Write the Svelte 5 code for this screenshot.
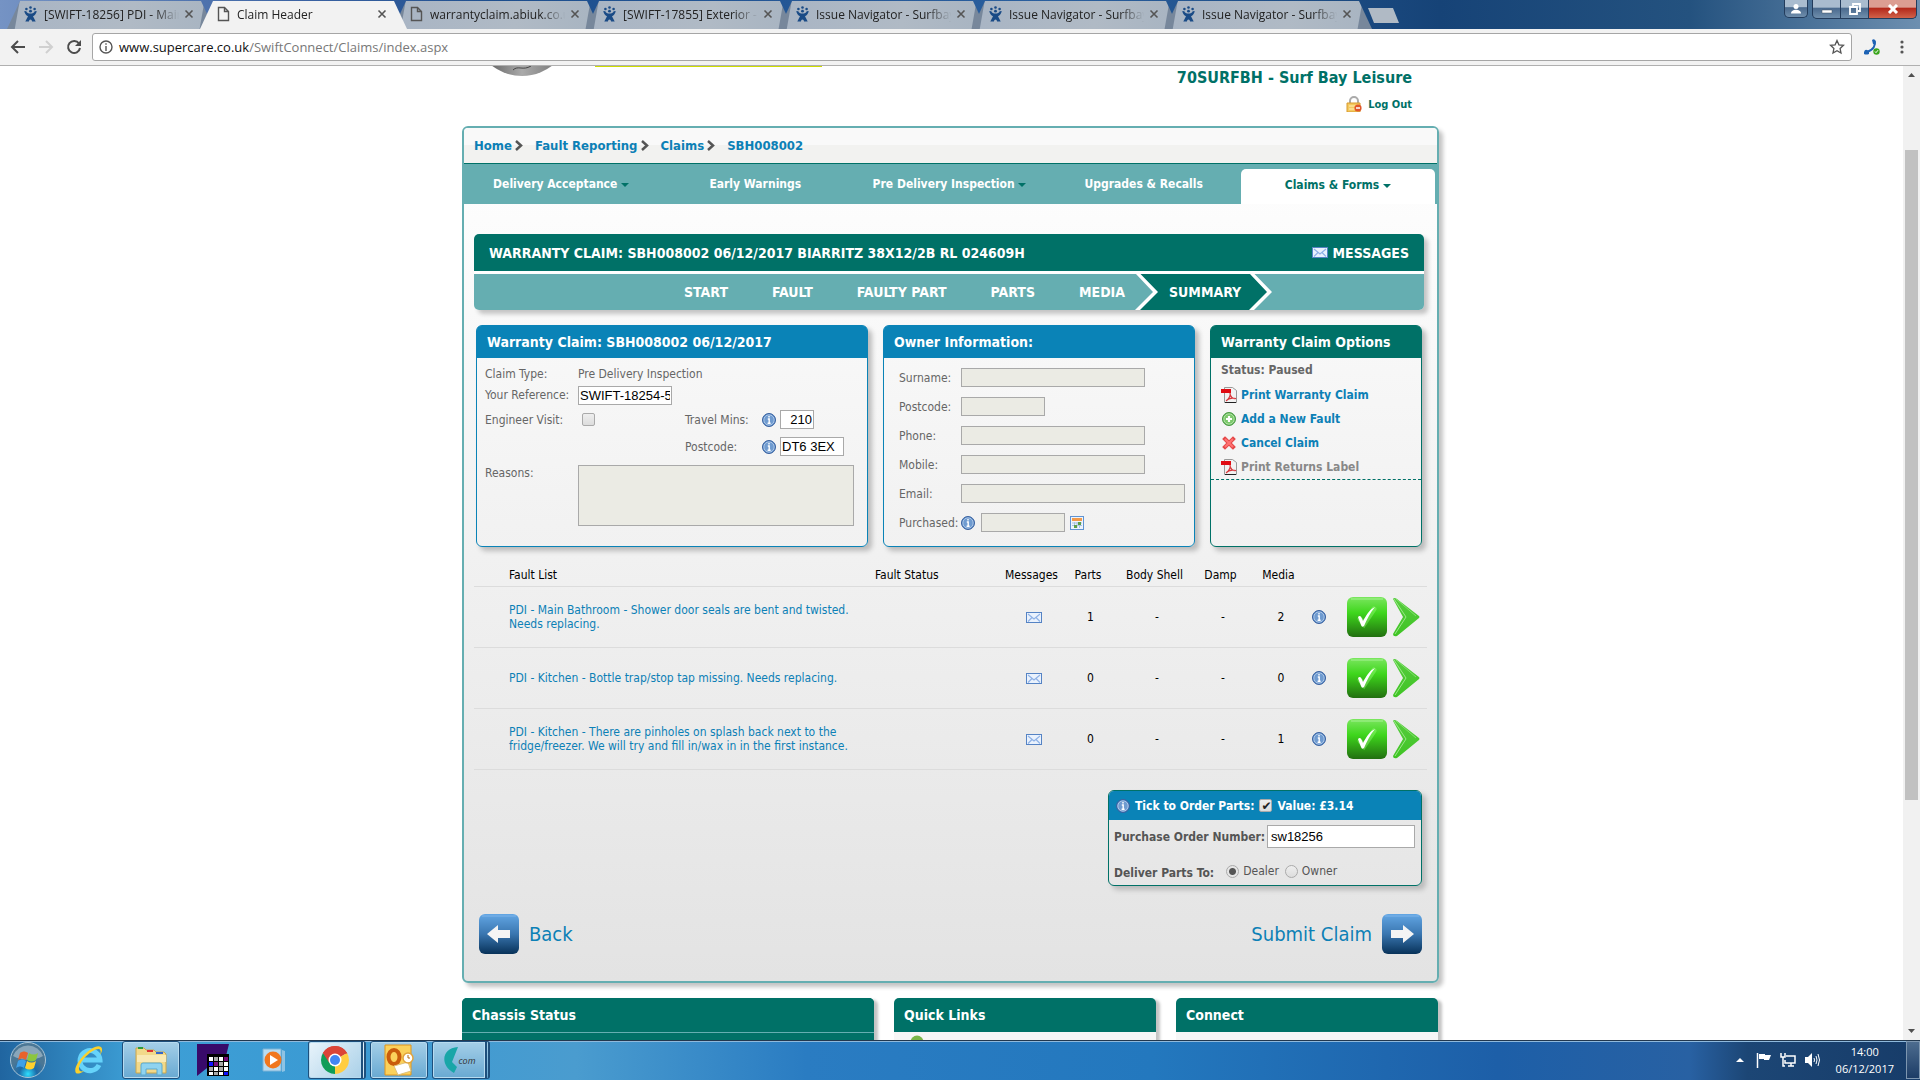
<script lang="ts">
  const tabs = [
    { title: "[SWIFT-18256] PDI - Main", icon: "jira" },
    { title: "Claim Header", icon: "page", active: true },
    { title: "warrantyclaim.abiuk.co.uk", icon: "page" },
    { title: "[SWIFT-17855] Exterior -", icon: "jira" },
    { title: "Issue Navigator - Surfbay", icon: "jira" },
    { title: "Issue Navigator - Surfbay", icon: "jira" },
    { title: "Issue Navigator - Surfbay", icon: "jira" }
  ];

  const crumbs = ["Home", "Fault Reporting", "Claims", "SBH008002"];

  const menu = [
    { label: "Delivery Acceptance", arrow: true },
    { label: "Early Warnings" },
    { label: "Pre Delivery Inspection", arrow: true },
    { label: "Upgrades & Recalls" },
    { label: "Claims & Forms", arrow: true, active: true }
  ];

  const steps = ["START", "FAULT", "FAULTY PART", "PARTS", "MEDIA"];

  const ownerFields = [
    { id: "surname", label: "Surname:", size: "medium" },
    { id: "ownerPostcode", label: "Postcode:", size: "short" },
    { id: "phone", label: "Phone:", size: "medium" },
    { id: "mobile", label: "Mobile:", size: "medium" },
    { id: "email", label: "Email:", size: "long" }
  ];

  const claimOptions = [
    { label: "Print Warranty Claim", icon: "pdf" },
    { label: "Add a New Fault", icon: "add" },
    { label: "Cancel Claim", icon: "cancel" },
    { label: "Print Returns Label", icon: "pdf", disabled: true }
  ];

  const faults = [
    { text: "PDI - Main Bathroom - Shower door seals are bent and twisted. Needs replacing.", parts: 1, media: 2 },
    { text: "PDI - Kitchen - Bottle trap/stop tap missing. Needs replacing.", parts: 0, media: 0 },
    { text: "PDI - Kitchen - There are pinholes on splash back next to the fridge/freezer. We will try and fill in/wax in in the first instance.", parts: 0, media: 1 }
  ];

  let reference = $state("SWIFT-18254-55");
  let engineerVisit = $state(false);
  let travelMins = $state("210");
  let postcode = $state("DT6 3EX");
  let orderParts = $state(true);
  let orderNumber = $state("sw18256");
  let deliverTo = $state("dealer");
</script>

{#snippet info()}
  <svg class="info" width="14" height="14" viewBox="0 0 14 14">
    <circle cx="7" cy="7" r="6.5" fill="#4a7fc0" stroke="#3a62a0" />
    <circle cx="7" cy="7" r="5.2" fill="#6f9bd0" stroke="#c3d6ee" stroke-width="0.8" />
    <path d="M7 3v1.6M5.8 6H7.2v4M5.6 10.2h3" fill="none" stroke="#fff" stroke-width="1.4" />
  </svg>
{/snippet}

{#snippet envelope()}
  <svg width="16" height="11" viewBox="0 0 16 11">
    <rect x="0.5" y="0.5" width="15" height="10" fill="#eaf2fd" stroke="#5583c4" />
    <path d="M2 2l6 5 6-5M2 9.5l4-4M14 9.5l-4-4" fill="none" stroke="#8fb2e6" stroke-width="1.2" />
  </svg>
{/snippet}

{#snippet jira()}
  <svg width="13" height="16" viewBox="0 0 13 16" fill="#1a4b86">
    <circle cx="2.4" cy="3" r="1.3" /><circle cx="6.5" cy="1.5" r="1.3" /><circle cx="10.6" cy="3" r="1.3" />
    <circle cx="6.5" cy="5.2" r="1.4" />
    <path d="M0.300 5l2 .2C3 8.300 10 8.300 10.700 5.200l2-.2c-.3 2.800-1.800 4.300-3.700 5.200l2.700 5.300H8c0-2.800-3-2.800-3 0H1.300L4 10.200C2.100 9.300.6 7.800.3 5z" />
  </svg>
{/snippet}

{#snippet stepArrow(before: string, after: string)}
  <svg width="24" height="36" viewBox="0 0 24 36">
    <path d="M0 0h24v36H0z" fill={after} />
    <path d="M0 0h2l17 18L2 36H0z" fill={before} />
    <path d="M1 0h4.500L23 18 5 36H0l18-18z" fill="#fff" />
  </svg>
{/snippet}

{#snippet bigArrow(left: boolean)}
  <svg width="40" height="40" viewBox="0 0 40 40">
    <rect width="40" height="40" rx="6" fill="url(#blueButton)" />
    <path d="M3 2h34" stroke="#7fb4ea" />
    <path d={left ? "M8 20l11-9v5h12v8H19v5z" : "M32 20l-11-9v5H9v8h12v5z"} fill="#f4f4f4" />
  </svg>
{/snippet}

<div class="desktop">
  <svg class="defs" width="0" height="0">
    <defs>
      <linearGradient id="blueButton" x2="0" y2="1">
        <stop offset="0" stop-color="#62a6e4" /><stop offset="0.5" stop-color="#3a76b0" /><stop offset="1" stop-color="#083259" />
      </linearGradient>
      <linearGradient id="greenButton" x2="0" y2="1">
        <stop offset="0" stop-color="#7be65f" /><stop offset="0.4" stop-color="#3ed61c" /><stop offset="1" stop-color="#226f10" />
      </linearGradient>
      <linearGradient id="greenArrow" x2="0" y2="1">
        <stop offset="0" stop-color="#56cc3e" /><stop offset="1" stop-color="#3fc424" />
      </linearGradient>
      <linearGradient id="silver" x2="1" y2="0">
        <stop offset="0" stop-color="#444" /><stop offset="0.5" stop-color="#aaa" /><stop offset="1" stop-color="#666" />
      </linearGradient>
      <radialGradient id="startOrb" cy="0.9">
        <stop offset="0" stop-color="#2ee0ff" /><stop offset="0.5" stop-color="#1b6aa8" /><stop offset="1" stop-color="#4b7795" />
      </radialGradient>
    </defs>
  </svg>

  <header class="tab-strip">
    <div class="tabs">
      {#each tabs as tab}
        <button class="tab" class:active={tab.active}>
          {#if tab.icon === "jira"}
            {@render jira()}
          {:else}
            <svg width="13" height="16" viewBox="0 0 13 16">
              <path d="M1.5 1.5h6l4 4v9h-10zM7.5 1.5v4h4" fill="none" stroke="#555" stroke-width="1.4" />
            </svg>
          {/if}
          <span class="tab-title">{tab.title}</span>
          <svg width="10" height="10" viewBox="0 0 10 10">
            <path d="M1.5 1.5l7 7M8.5 1.5l-7 7" stroke="#555" stroke-width="1.6" />
          </svg>
        </button>
      {/each}
      <button class="new-tab" aria-label="New tab"></button>
    </div>
    <div class="window-buttons">
      <button class="user" aria-label="User">
        <svg width="12" height="10" viewBox="0 0 12 10" fill="#fff"><circle cx="6" cy="2.5" r="2.5" /><path d="M1 9.5c0-5 10-5 10 0z" /></svg>
      </button>
      <div class="window-group">
        <button aria-label="Minimise">
          <svg width="12" height="10" viewBox="0 0 12 10"><path d="M1 6h10v3H1z" fill="#fff" stroke="#456" stroke-width="0.5" /></svg>
        </button>
        <button aria-label="Restore">
          <svg width="12" height="12" viewBox="0 0 12 12" fill="none" stroke="#fff" stroke-width="1.8"><path d="M4 3V1h7v7H9M1 4h7v7H1z" /></svg>
        </button>
        <button class="close" aria-label="Close">
          <svg width="12" height="10" viewBox="0 0 12 10"><path d="M2 1l8 8M10 1L2 9" stroke="#fff" stroke-width="3" /></svg>
        </button>
      </div>
    </div>
  </header>

  <div class="toolbar">
    <button aria-label="Back">
      <svg width="16" height="16" viewBox="0 0 16 16" fill="none" stroke="#4c4c4c" stroke-width="2"><path d="M15 8H2M8 2L2 8l6 6" /></svg>
    </button>
    <button aria-label="Forward">
      <svg width="16" height="16" viewBox="0 0 16 16" fill="none" stroke="#d0d0d0" stroke-width="2"><path d="M1 8h13M8 2l6 6-6 6" /></svg>
    </button>
    <button aria-label="Reload">
      <svg width="16" height="16" viewBox="0 0 16 16"><path d="M13 4.5A6 6 0 1 0 14 9" fill="none" stroke="#4c4c4c" stroke-width="2" /><path d="M15 1v6H9z" fill="#4c4c4c" /></svg>
    </button>
    <div class="omnibox">
      <svg width="14" height="14" viewBox="0 0 14 14" fill="none" stroke="#555" stroke-width="1.4"><circle cx="7" cy="7" r="6" /><path d="M7 3.300v1.5M7 6v5" /></svg>
      <span class="url">www.supercare.co.uk<span>/SwiftConnect/Claims/index.aspx</span></span>
      <svg width="16" height="16" viewBox="0 0 16 16"><path d="M8 1.5l1.900 4.300 4.600.5-3.400 3.200.9 4.600L8 11.800l-4 2.300.9-4.600L1.500 6.300l4.600-.5z" fill="none" stroke="#555" stroke-width="1.3" /></svg>
    </div>
    <button aria-label="Phone">
      <svg width="16" height="16" viewBox="0 0 16 16">
        <path d="M10.500 2c1.500 4-1 9-7.500 11" fill="none" stroke="#1d62b4" stroke-width="2" />
        <path d="M8 1q3-2 4 2l-1 3-2-1zM0 13q1-3 3-2l2 1v3q-3 1-5 0z" fill="#1d62b4" />
        <circle cx="12.500" cy="12.500" r="3.200" fill="#3aa51c" /><path d="M11 12.500l1 1.200 2-2.500" stroke="#fff" fill="none" />
      </svg>
    </button>
    <button class="more" aria-label="Menu">
      <svg width="4" height="16" viewBox="0 0 4 16" fill="#555"><circle cx="2" cy="3" r="1.6" /><circle cx="2" cy="8" r="1.6" /><circle cx="2" cy="13" r="1.6" /></svg>
    </button>
  </div>

  <div class="viewport">
    <div class="site">
      <div class="site-header">
        <svg width="62" height="10" viewBox="0 0 62 10"><circle cx="31" cy="-39" r="49" fill="url(#silver)" /><path d="M22 4c5-5 10 1 18-4" stroke="#444" fill="none" /></svg>
        <div class="logo-line"></div>
        <div class="account">
          <strong>70SURFBH - Surf Bay Leisure</strong>
          <a href="#logout">
            <svg width="16" height="16" viewBox="0 0 16 16">
              <path d="M4 8V5a4 4 0 0 1 8 0v3" fill="none" stroke="#aaa" stroke-width="2" />
              <path d="M1 7h13v9H1z" fill="#f4c95f" stroke="#d89a2c" /><path d="M3 10h9M3 13h9" stroke="#fff0b8" />
              <circle cx="12" cy="12" r="3.6" fill="#e0562a" /><path d="M10 12h4" stroke="#fff" stroke-width="1.5" />
            </svg>
            Log Out
          </a>
        </div>
      </div>

      <main class="main-box">
        <nav class="breadcrumb">
          {#each crumbs as crumb, i}
            <a href="#{crumb}">{crumb}</a>
            {#if i < crumbs.length - 1}
              <svg width="8" height="11" viewBox="0 0 8 11"><path d="M1 1l5 4.500L1 10" fill="none" stroke="#555" stroke-width="2.5" /></svg>
            {/if}
          {/each}
        </nav>

        <nav class="menu">
          {#each menu as item}
            <a href="#{item.label}" class:active={item.active}>
              {item.label}
              {#if item.arrow}<span class="arrow"></span>{/if}
            </a>
          {/each}
        </nav>

        <div class="content">
          <div class="claim-bar">
            <div class="claim-title">
              <h1>WARRANTY CLAIM: SBH008002 06/12/2017 BIARRITZ 38X12/2B RL 024609H</h1>
              <a href="#messages">{@render envelope()} MESSAGES</a>
            </div>
            <div class="steps">
              {#each steps as step}
                <a href="#{step}">{step}</a>
              {/each}
              <div class="current">
                {@render stepArrow("#65aeb1", "#007167")}
                <a href="#summary">SUMMARY</a>
                {@render stepArrow("#007167", "#65aeb1")}
              </div>
            </div>
          </div>

          <div class="cards">
            <section class="card">
              <h2>Warranty Claim: SBH008002 06/12/2017</h2>
              <div class="claim-form">
                <span>Claim Type:</span>
                <span class="wide">Pre Delivery Inspection</span>
                <label for="reference">Your Reference:</label>
                <div class="wide"><input id="reference" class="reference" bind:value={reference} /></div>
                <label for="engineer">Engineer Visit:</label>
                <div><input id="engineer" type="checkbox" class="tick" bind:checked={engineerVisit} /></div>
                <label for="travel">Travel Mins:</label>
                {@render info()}
                <input id="travel" class="travel" bind:value={travelMins} />
                <label for="postcode" class="third">Postcode:</label>
                {@render info()}
                <input id="postcode" class="postcode" bind:value={postcode} />
                <label for="reasons" class="reasons">Reasons:</label>
                <textarea id="reasons" class="wide" disabled></textarea>
              </div>
            </section>

            <section class="card">
              <h2>Owner Information:</h2>
              <div class="owner-form">
                {#each ownerFields as field}
                  <div class="owner-row">
                    <label for={field.id}>{field.label}</label>
                    <input id={field.id} class={field.size} disabled />
                  </div>
                {/each}
                <div class="owner-row">
                  <label for="purchased">Purchased:</label>
                  {@render info()}
                  <input id="purchased" class="short" disabled />
                  <svg width="14" height="14" viewBox="0 0 14 14">
                    <rect x="0.5" y="0.5" width="13" height="13" fill="#eef4fc" stroke="#5f93d2" />
                    <path d="M2 2h10v3H2z" fill="#f29a4a" />
                    <path d="M2 7h10M2 9.500h10M4.500 6v6M7 6v6M9.500 6v6" stroke="#a8c2e2" />
                    <path d="M8 6h3v3H8zM4 9h3v3H4z" fill="#5aa04b" />
                  </svg>
                </div>
              </div>
            </section>

            <section class="card options">
              <h2>Warranty Claim Options</h2>
              <div class="status">Status: Paused</div>
              <ul>
                {#each claimOptions as option}
                  <li class:disabled={option.disabled}>
                    <svg width="16" height="16" viewBox="0 0 16 16">
                      {#if option.icon === "pdf"}
                        <path d="M3.500 0.500h8l4 3v12h-12z" fill="#f2f2f2" stroke="#999" /><path d="M4 15.500h11" stroke="#222" />
                        <path d="M0 2h10v4H0z" fill="#e00b12" />
                        <path d="M5 14c3-2 5-6 4-8 0 4 3 6 6 5.500-4-1-8 0-10 2.500" fill="none" stroke="#d8383c" stroke-width="1.2" />
                      {:else if option.icon === "add"}
                        <circle cx="8" cy="8" r="6.5" fill="#58b04c" stroke="#4a9a44" /><circle cx="8" cy="8" r="5.2" fill="#7cc96b" stroke="#c6ecbc" stroke-width="0.8" />
                        <path d="M8 5v6M5 8h6" stroke="#fff" stroke-width="2.2" />
                      {:else}
                        <path d="M4 4l8 8M12 4l-8 8" stroke="#e54848" stroke-width="4" stroke-linecap="square" />
                        <path d="M4 4l8 8M12 4l-8 8" stroke="#ff7272" stroke-width="2" />
                      {/if}
                    </svg>
                    <a href="#{option.label}">{option.label}</a>
                  </li>
                {/each}
              </ul>
            </section>
          </div>

          <table>
            <thead>
              <tr>
                <th class="fault">Fault List</th>
                <th class="state">Fault Status</th>
                <th class="messages">Messages</th>
                <th class="parts">Parts</th>
                <th class="body-shell">Body Shell</th>
                <th class="damp">Damp</th>
                <th class="media">Media</th>
                <th class="hint"></th>
                <th class="buttons"></th>
              </tr>
            </thead>
            <tbody>
              {#each faults as fault}
                <tr>
                  <td class="fault"><a href="#fault">{fault.text}</a></td>
                  <td></td>
                  <td>{@render envelope()}</td>
                  <td>{fault.parts}</td>
                  <td>-</td>
                  <td>-</td>
                  <td>{fault.media}</td>
                  <td class="hint">{@render info()}</td>
                  <td>
                    <div class="fault-buttons">
                      <button aria-label="Complete">
                        <svg width="40" height="40" viewBox="0 0 40 40">
                          <rect width="40" height="40" rx="6" fill="url(#greenButton)" /><path d="M4 2h32" stroke="#a6f293" />
                          <path d="M13 22l4 5 10-15" fill="none" stroke="#9dff80" stroke-width="5" opacity="0.4" stroke-linecap="round" />
                          <path d="M11 20c2-2 3-1 5 4C20 17 23 12 28 10 23 16 20 22 17 29c-2 1-2 1-3-1z" fill="#fff" />
                        </svg>
                      </button>
                      <button aria-label="Open">
                        <svg width="28" height="40" viewBox="0 0 28 40">
                          <path d="M1 2q1-2 4 0l22 17q1 1 0 2L5 39q-4 1-4-2l10-17z" fill="url(#greenArrow)" />
                          <path d="M2 2l12 18L3 37" fill="none" stroke="#9be889" />
                          <path d="M4 2l20 17" stroke="#83e06c" />
                        </svg>
                      </button>
                    </div>
                  </td>
                </tr>
              {/each}
            </tbody>
          </table>

          <section class="order">
            <div class="order-title">
              {@render info()}
              <label for="orderParts">Tick to Order Parts:</label>
              <input id="orderParts" type="checkbox" class="tick" bind:checked={orderParts} />
              <span>Value: £3.14</span>
            </div>
            <div class="order-row">
              <label for="orderNumber">Purchase Order Number:</label>
              <input id="orderNumber" bind:value={orderNumber} />
            </div>
            <div class="order-row deliver">
              <strong>Deliver Parts To:</strong>
              <label><input type="radio" value="dealer" bind:group={deliverTo} /> Dealer</label>
              <label><input type="radio" value="owner" bind:group={deliverTo} /> Owner</label>
            </div>
          </section>

          <div class="page-buttons">
            <button>{@render bigArrow(true)} Back</button>
            <button>Submit Claim {@render bigArrow(false)}</button>
          </div>
        </div>
      </main>

      <footer>
        <section class="lined"><h2>Chassis Status</h2></section>
        <section>
          <h2>Quick Links</h2>
          <svg width="14" height="8" viewBox="0 0 14 8"><circle cx="7" cy="10" r="6.5" fill="#7ab648" /></svg>
        </section>
        <section><h2>Connect</h2></section>
      </footer>
    </div>

    <div class="scrollbar">
      <svg width="7" height="4" viewBox="0 0 7 4"><path d="M0 4h7L3.500 0z" fill="#505050" /></svg>
      <div class="track"><div class="thumb"></div></div>
      <svg width="7" height="4" viewBox="0 0 7 4"><path d="M0 0h7L3.500 4z" fill="#505050" /></svg>
    </div>
  </div>

  <div class="taskbar">
    <button class="start" aria-label="Start">
      <svg width="38" height="38" viewBox="0 0 38 38">
        <circle cx="19" cy="19" r="17.5" fill="url(#startOrb)" stroke="#a9c4d6" />
        <path d="M4 15a16 16 0 0 1 30 0c-9 5-21 5-30 0z" fill="#fff" opacity="0.35" />
        <path d="M11 12c3-2 5-2 8 0l-2 7c-3-2-5-2-8 0z" fill="#e8622b" /><path d="M20 12c3 2 6 2 9 0l-2 7c-3 2-6 2-9 0z" fill="#8cc63f" />
        <path d="M9 20c3-2 5-2 8 0l-2 7c-3-2-5-2-8 0z" fill="#3fa0e8" /><path d="M18 20c3 2 6 2 9 0l-2 7c-3 2-6 2-9 0z" fill="#ffd02e" />
      </svg>
    </button>
    <button aria-label="Internet Explorer">
      <svg width="32" height="32" viewBox="0 0 32 32">
        <path d="M26 21a10 10 0 1 1 1-5H9" fill="none" stroke="#66d3fa" stroke-width="5" />
        <path d="M3 29C-2 22 20-2 28 3c2 2 1 5-1 8 1-3 1-5-1-6C20 4 5 18 6 25c0 2 2 3 5 2-4 3-7 3-8 2z" fill="#fad02c" />
      </svg>
    </button>
    <button class="open" aria-label="Explorer">
      <svg width="34" height="32" viewBox="0 0 34 32">
        <path d="M2 4h8l2 2h8l2 2h8l2 2v19H2z" fill="#f2d98a" stroke="#c9a64d" />
        <path d="M4 4h5" stroke="#2c9a3c" stroke-width="2" /><path d="M13 7h6" stroke="#d33" stroke-width="2" /><path d="M22 9h7" stroke="#36c" stroke-width="2" />
        <path d="M3 11h29v7H3z" fill="#f9e9b4" />
        <path d="M7 31V21q0-2 2-2h17q2 0 2 2v10h-5v-6H12v6z" fill="#8fd3f0" stroke="#5aa9cf" />
      </svg>
    </button>
    <button aria-label="Grid">
      <svg width="32" height="32" viewBox="0 0 32 32">
        <path d="M0 0h32l-3 12H10v12L0 32z" fill="#380a6a" /><path d="M10 10h22v22H10z" fill="#000" />
        <g fill="#fff">
          <path d="M12 13h4v4h-4zM22 13h4v4h-4zM17 23h4v4h-4zM27 18h4v4h-4zM12 28h4v3h-4zM22 28h4v3h-4zM27 23h4v4h-4z" />
          <path d="M17 13h4v4h-4zM22 18h4v4h-4zM12 23h4v4h-4zM17 28h4v3h-4zM22 23h4v4h-4z" fill="#aaa" />
          <path d="M12 18h4v4h-4zM27 28h4v3h-4z" fill="#11f" /><path d="M27 13h4v4h-4zM17 18h4v4h-4z" fill="#7b0d7b" />
        </g>
      </svg>
    </button>
    <button aria-label="Media Player">
      <svg width="26" height="26" viewBox="0 0 26 26">
        <path d="M1 2h18v22H1z" fill="#b9dcf1" stroke="#7db3d6" /><path d="M20 3l3 1v20l-3 1z" fill="#8ec3e4" />
        <circle cx="11" cy="13" r="8.5" fill="#f1771e" /><path d="M8 8l8 5-8 5z" fill="#fff" />
      </svg>
    </button>
    <button class="open active stack" aria-label="Chrome">
      <svg width="30" height="30" viewBox="0 0 30 30">
        <path d="M15 15L2.900 8A14 14 0 0 1 27.100 8z" fill="#db4437" /><path d="M15 15L27.100 8A14 14 0 0 1 15 29z" fill="#ffcd40" />
        <path d="M15 15L15 29A14 14 0 0 1 2.900 8z" fill="#0f9d58" /><path d="M15 8.500H27.400A14 14 0 0 0 2.900 8l6.500 10z" fill="#db4437" />
        <circle cx="15" cy="15" r="6.5" fill="#fff" /><circle cx="15" cy="15" r="5" fill="#4285f4" />
      </svg>
    </button>
    <button class="open" aria-label="Outlook">
      <svg width="30" height="32" viewBox="0 0 30 32">
        <path d="M1 1h26v30H1z" fill="#fbd15b" stroke="#e0941d" /><ellipse cx="10" cy="13" rx="5.5" ry="7" fill="none" stroke="#c95c0c" stroke-width="4" />
        <path d="M10 22l14-4 3 9-13 4z" fill="#fff" stroke="#ddc07a" />
        <circle cx="24" cy="14" r="5" fill="#fff" stroke="#e0a33b" stroke-width="1.5" /><path d="M24 11v3h2" fill="none" stroke="#b06a12" />
      </svg>
    </button>
    <button class="open stack" aria-label="Com">
      <svg width="16" height="28" viewBox="0 0 16 28"><path d="M15 1C-2 2-3 20 11 27l3-6-5-5z" fill="#19a6a8" /></svg>
      <em>com</em>
    </button>
    <div class="tray">
      <svg width="8" height="4" viewBox="0 0 8 4"><path d="M0 4h8L4 0z" fill="#fff" /></svg>
      <svg width="16" height="16" viewBox="0 0 16 16"><path d="M1.500 1v15" stroke="#fff" stroke-width="1.5" /><path d="M3 2h6v1h6l-2 5H8V7H3z" fill="#fff" /></svg>
      <svg width="16" height="16" viewBox="0 0 16 16" fill="none" stroke="#fff" stroke-width="1.5"><path d="M6 4h9v7H5V8M8 14h6M11 11v3M1 1v4h4V1M3 5v9h2" /></svg>
      <svg width="16" height="16" viewBox="0 0 16 16"><path d="M1 5h3l4-4v14l-4-4H1z" fill="#fff" /><path d="M10 6q1 2 0 4M12 4q2 4 0 8M14 2q3 6 0 12" fill="none" stroke="#fff" /></svg>
      <div class="clock"><span>14:00</span><span>06/12/2017</span></div>
      <button class="show-desktop" aria-label="Show desktop"></button>
    </div>
  </div>
</div>

<style>
  :global(body) {
    margin: 0;
    overflow: hidden;
  }

  .desktop {
    display: flex;
    flex-direction: column;
    height: 100vh;
    font-family: Tahoma, "DejaVu Sans Condensed", "DejaVu Sans", sans-serif;
    font-size: 12px;
    color: #666;
    background: #fff;
  }

  .defs {
    display: block;
  }

  svg {
    flex: none;
  }

  button {
    padding: 0;
    border: none;
    background: none;
    font: inherit;
    color: inherit;
  }

  a {
    color: #0c80b6;
    text-decoration: none;
  }

  h1,
  h2 {
    margin: 0;
    font-size: 14px;
    color: #fff;
  }

  input,
  textarea {
    box-sizing: border-box;
    margin: 0;
    padding: 1px;
    border: 1px solid #a9a9a9;
    background: #fff;
    font: 13px "Liberation Sans", Arial, sans-serif;
    color: #000;
  }

  input:disabled,
  textarea:disabled {
    background: #ebebe4;
  }

  input[type="checkbox"] {
    width: 13px;
    height: 13px;
  }

  .tick {
    appearance: none;
    border: 1px solid #aaa;
    border-radius: 2px;
    background: linear-gradient(#eee, #ddd);
  }

  .tick:checked::before {
    content: "✔";
    display: block;
    font: 12px/10px "DejaVu Sans", sans-serif;
    color: #222;
  }

  /* browser window */
  .tab-strip {
    display: flex;
    justify-content: space-between;
    height: 29px;
    background: linear-gradient(90deg, #7593c4, #3a62a2 16%, #1d4e8d 26%, #2a5f9e 55%, #164377 75%, #24527f 88%, #6d8fb0);
    font-family: "Segoe UI", "Open Sans", sans-serif;
  }

  .tabs {
    display: flex;
    align-items: flex-end;
    padding-left: 7px;
  }

  .tab {
    display: flex;
    align-items: center;
    box-sizing: border-box;
    width: 207px;
    height: 28px;
    margin-right: -14px;
    padding: 0 20px 2px 17px;
    background: linear-gradient(100deg, #77879b 12px, #a9b5c4 13px, #b0bac5 60%, #a9b5c2 194px, #77879b 195px);
    clip-path: polygon(0 100%, 13px 0, 194px 0, 100% 100%);
    color: #222;
  }

  .tab.active {
    z-index: 1;
    background: #f2f2f2;
  }

  .tab-title {
    flex: 1;
    margin: 0 2px 0 7px;
    overflow: hidden;
    white-space: nowrap;
    text-align: left;
    mask-image: linear-gradient(90deg, #000 80%, transparent 98%);
  }

  .new-tab {
    width: 31px;
    height: 15px;
    margin: 0 0 6px 10px;
    background: #b0bac5;
    clip-path: polygon(0 0, 25px 0, 100% 100%, 6px 100%);
  }

  .window-buttons {
    display: flex;
    gap: 4px;
    padding-right: 3px;
  }

  .window-buttons button {
    display: flex;
    align-items: center;
    justify-content: center;
    width: 27px;
    height: 18px;
    background: linear-gradient(#a9bccf 40%, #4a6a8e 45%, #6f8eac);
  }

  .window-buttons .user,
  .window-group {
    height: 18px;
    border: 1px solid #233c5c;
    border-top: none;
    border-radius: 0 0 5px 5px;
    overflow: hidden;
  }

  .window-buttons .user {
    width: 24px;
  }

  .window-group {
    display: flex;
    gap: 1px;
    background: #233c5c;
  }

  .window-buttons .close {
    width: 47px;
    background: linear-gradient(#dc9d92 40%, #b3271a 45%, #d1624a);
  }

  .toolbar {
    display: flex;
    align-items: center;
    gap: 12px;
    height: 36px;
    padding: 0 16px 0 10px;
    border-bottom: 1px solid #b0b0b0;
    background: #f2f2f2;
  }

  .toolbar button {
    display: flex;
  }

  .toolbar .more {
    margin-left: 8px;
  }

  .omnibox {
    flex: 1;
    display: flex;
    align-items: center;
    gap: 6px;
    height: 26px;
    margin-left: -2px;
    padding: 0 6px;
    border: 1px solid #a6a6a6;
    border-radius: 3px;
    background: #fff;
    font: 13px "Segoe UI", "Open Sans", sans-serif;
    color: #111;
  }

  .url {
    flex: 1;
  }

  .url span {
    color: #777;
  }

  .viewport {
    flex: 1;
    display: grid;
    grid-template-columns: 1fr 17px;
    min-height: 0;
    overflow: hidden;
  }

  .scrollbar {
    display: flex;
    flex-direction: column;
    align-items: center;
    padding: 7px 0;
    background: #f1f1f1;
  }

  .track {
    flex: 1;
    padding-top: 73px;
  }

  .thumb {
    width: 13px;
    height: 74%;
    background: #c1c1c1;
  }

  /* site */
  .site {
    box-sizing: border-box;
    width: 979px;
    max-width: 100%;
    min-height: 0;
    margin: 0 auto;
    padding-right: 2px;
  }

  .site-header {
    display: flex;
    align-items: flex-start;
    height: 60px;
    padding: 0 27px 0 29px;
  }

  .logo-line {
    width: 227px;
    height: 1px;
    margin-left: 42px;
    background: #cedc00;
  }

  .account {
    flex: 1;
    display: flex;
    flex-direction: column;
    align-items: flex-end;
    gap: 7px;
    font-weight: bold;
  }

  .account strong {
    font-size: 16px;
    line-height: 23px;
    color: #007167;
  }

  .account a {
    display: flex;
    align-items: center;
    gap: 6px;
    font-size: 11px;
    color: #007167;
  }

  .main-box {
    border: 2px solid #65aeb1;
    border-radius: 6px;
    background: linear-gradient(#fff, #e3e3e3);
    box-shadow: 4px 4px 4px #c4c4c4;
  }

  .breadcrumb {
    display: flex;
    align-items: center;
    height: 35px;
    padding-left: 10px;
    border-bottom: 1px solid #007167;
    border-radius: 4px 4px 0 0;
    background: linear-gradient(#f9f9f9 50%, #f2f2f0 50%);
    font-size: 13px;
    font-weight: bold;
  }

  .breadcrumb svg {
    margin: 0 12px 0 3px;
  }

  .menu {
    display: grid;
    grid-template-columns: repeat(5, 1fr);
    height: 40px;
    padding-right: 2px;
    background: #65aeb1;
    font-weight: bold;
    line-height: 40px;
    text-align: center;
  }

  .menu a {
    color: #fff;
  }

  .menu a.active {
    margin-top: 5px;
    border-radius: 5px 5px 0 0;
    background: #fff;
    line-height: 32px;
    color: #007167;
  }

  .arrow {
    display: inline-block;
    border: 4px solid transparent;
    border-top-color: #007167;
    border-bottom: none;
    vertical-align: middle;
  }

  .content {
    padding: 30px 10px 27px;
  }

  .claim-bar {
    margin-right: 3px;
    border-radius: 5px;
    overflow: hidden;
    box-shadow: 4px 4px 4px #c4c4c4;
    background: #fff;
  }

  .claim-title {
    display: flex;
    align-items: center;
    justify-content: space-between;
    height: 37px;
    margin-bottom: 3px;
    padding: 0 15px;
    background: #007167;
  }

  .claim-title a {
    display: flex;
    align-items: center;
    gap: 5px;
    font-size: 14px;
    font-weight: bold;
    color: #fff;
  }

  .steps {
    display: flex;
    align-items: center;
    gap: 44px;
    height: 36px;
    padding-left: 210px;
    background: #65aeb1;
    font-size: 14px;
    font-weight: bold;
  }

  .steps a {
    color: #fff;
  }

  .current {
    display: flex;
    margin-left: -34px;
  }

  .current a {
    padding: 0 8px 0 10px;
    background: #007167;
    line-height: 36px;
  }

  .cards {
    display: grid;
    grid-template-columns: 392fr 312fr 212fr;
    gap: 15px;
    margin: 15px 5px 0 2px;
  }

  .card {
    border: 1px solid #0a83b7;
    border-radius: 6px;
    box-shadow: 4px 4px 5px #bbb;
  }

  .card h2 {
    height: 32px;
    padding-left: 10px;
    border-radius: 4px 4px 0 0;
    background: #0a83b7;
    line-height: 32px;
  }

  .claim-form {
    display: grid;
    grid-template-columns: 93px 107px 77px 18px 1fr;
    grid-template-rows: 20px 22px 27px 27px 66px;
    align-items: center;
    padding: 6px 13px 20px 8px;
  }

  .wide {
    grid-column: 2 / -1;
  }

  .third {
    grid-column: 3;
  }

  .claim-form input:not(.tick),
  .owner-row input {
    height: 19px;
  }

  .claim-form .reference {
    display: block;
    width: 94px;
  }

  .claim-form .tick {
    display: block;
    margin-left: 4px;
  }

  .travel {
    width: 34px;
    text-align: right;
  }

  .postcode {
    width: 64px;
  }

  .reasons {
    align-self: start;
    margin-top: 6px;
  }

  textarea {
    width: 276px;
    height: 61px;
    align-self: end;
    resize: none;
  }

  .owner-form {
    padding: 5px 0 9px 15px;
  }

  .owner-row {
    display: flex;
    align-items: center;
    height: 29px;
  }

  .owner-row label {
    width: 62px;
  }

  .owner-row input {
    width: 184px;
  }

  .owner-row input.long {
    width: 224px;
  }

  .owner-row input.short {
    width: 84px;
  }

  .owner-row .info {
    margin-right: 6px;
  }

  .owner-row input + svg {
    margin-left: 5px;
  }

  .options {
    border-color: #007167;
    font-weight: bold;
  }

  .options h2 {
    background: #007167;
  }

  .status {
    padding-left: 10px;
    line-height: 25px;
  }

  .options ul {
    margin: 0;
    padding: 0 0 0 10px;
    list-style: none;
    border-bottom: 1px dashed #007167;
  }

  .options li {
    display: flex;
    align-items: center;
    gap: 4px;
    height: 24px;
  }

  .disabled a {
    color: #888;
  }

  table {
    width: 100%;
    margin-top: 16px;
    border-collapse: collapse;
    table-layout: fixed;
    color: #000;
    text-align: center;
  }

  th,
  td {
    padding: 0;
    border-bottom: 1px solid #dcdcdc;
  }

  th {
    height: 23px;
    padding-right: 5px;
    font-weight: normal;
    white-space: nowrap;
  }

  td {
    height: 60px;
  }

  .fault {
    padding: 0 24px 0 35px;
    line-height: 14px;
    text-align: left;
  }

  .state {
    width: 125px;
    text-align: left;
  }

  .messages { width: 53px; }
  .parts { width: 50px; }
  .body-shell { width: 73px; }
  .damp { width: 49px; }
  .media { width: 57px; }
  .hint { width: 30px; text-align: left; }
  .buttons { width: 75px; }

  td svg {
    vertical-align: middle;
  }

  .fault-buttons {
    display: flex;
    gap: 5px;
  }

  .order {
    width: 312px;
    margin: 20px 5px 0 auto;
    border: 1px solid #007167;
    border-radius: 6px;
    box-shadow: 4px 4px 5px #bbb;
    font-weight: bold;
    color: #555;
  }

  .order-title {
    display: flex;
    align-items: center;
    gap: 5px;
    height: 29px;
    padding-left: 7px;
    border-radius: 5px 5px 0 0;
    background: #0a83b7;
    color: #fff;
  }

  .order-row {
    display: flex;
    align-items: center;
    justify-content: space-between;
    height: 33px;
    padding: 0 6px 0 5px;
  }

  .order-row > input {
    width: 148px;
    height: 23px;
    padding-left: 3px;
  }

  .deliver {
    justify-content: flex-start;
    gap: 6px;
    height: 28px;
    padding-top: 4px;
  }

  .deliver strong {
    margin: 4px 6px 0 0;
  }

  .deliver label {
    display: flex;
    align-items: center;
    gap: 4px;
    font-weight: normal;
  }

  .deliver input {
    appearance: none;
    width: 13px;
    height: 13px;
    border: 1px solid #aaa;
    border-radius: 50%;
    background: linear-gradient(#eee, #ddd);
  }

  .deliver input:checked {
    background: radial-gradient(#555 3px, #e6e6e6 4px);
  }

  .page-buttons {
    display: flex;
    justify-content: space-between;
    margin: 28px 5px 0;
  }

  .page-buttons button {
    display: flex;
    align-items: center;
    gap: 10px;
    font-size: 20px;
    color: #0c80b6;
  }

  footer {
    display: grid;
    grid-template-columns: 412fr 262fr 262fr;
    gap: 20px;
    margin: 15px 1px 0 0;
  }

  footer section {
    height: 60px;
    border-radius: 5px 5px 0 0;
    background: #f6f6f6;
    box-shadow: 4px 2px 3px #c4c4c4;
  }

  footer h2 {
    padding-left: 10px;
    border-radius: 5px 5px 0 0;
    background: #007167;
    line-height: 34px;
  }

  footer svg {
    display: block;
    margin-left: 16px;
  }

  .lined {
    background: #007167;
  }

  .lined h2 {
    border-bottom: 1px solid #65aeb1;
  }

  /* taskbar */
  .taskbar {
    display: flex;
    align-items: center;
    gap: 4px;
    height: 38px;
    padding-bottom: 1px;
    border-top: 1px solid #22384f;
    box-shadow: inset 0 1px #8fb9dc;
    background: linear-gradient(90deg, #2065a0, #3d9fd6 7%, #3b9ad3 18%, #4a9ccf 30%, #2a7cc2 42%, #2378be 60%, #1d5fa8 78%, #2861a3 88%, #1c4675 91%, #173c69);
  }

  .taskbar > button {
    display: flex;
    align-items: center;
    justify-content: center;
    box-sizing: border-box;
    width: 58px;
    height: 38px;
  }

  .taskbar .start {
    width: 56px;
  }

  .taskbar .open {
    border: 1px solid #1d4f7c;
    border-radius: 3px;
    background: linear-gradient(#a5cfe8, #68a9d2);
    box-shadow: inset 0 0 0 1px #b7dbf0;
  }

  .taskbar .active {
    background: linear-gradient(135deg, #e9f4fb, #a9d0e8);
  }

  .taskbar .stack {
    border-right: 5px double #1d4f7c;
  }

  em {
    font: italic 9px "Open Sans", sans-serif;
    color: #333;
  }

  .tray {
    display: flex;
    align-items: center;
    gap: 8px;
    margin-left: auto;
    color: #fff;
  }

  .tray svg:first-child {
    margin-right: 4px;
  }

  .clock {
    display: flex;
    flex-direction: column;
    align-items: center;
    margin: 0 4px 0 8px;
    font: 11px/17px "Segoe UI", "Open Sans", sans-serif;
  }

  .show-desktop {
    box-sizing: border-box;
    width: 14px;
    height: 38px;
    border: 1px solid #7d96b0;
    background: linear-gradient(#4d6c8f, #1c3c66);
  }
</style>
